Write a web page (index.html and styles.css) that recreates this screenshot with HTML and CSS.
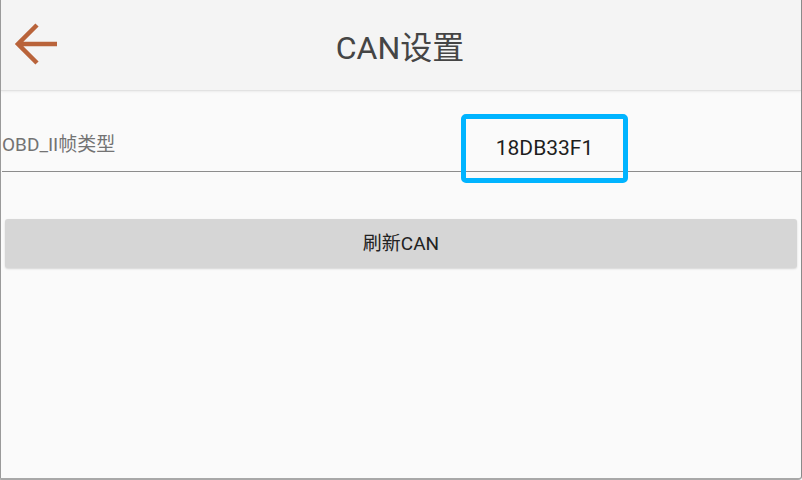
FILE: index.html
```html
<!doctype html>
<html>

	<head>
		<title>CAN设置</title>
		<meta charset="utf-8" />
		<link rel="stylesheet" href="styles.css">
	</head>

	<body>
		<div class="frame">
			<div class="header">
				<span class="back">
					<svg width="46" height="46" viewBox="0 0 46 46">
						<path d="M44 22 H5 M24 3 L5 22 L24 41" fill="none" stroke="#b9633a" stroke-width="4.5" />
					</svg>
				</span>
				<h1 class="title">CAN设置</h1>
			</div>
			<div class="content">
				<div class="row">
					<span class="label">OBD_II帧类型</span>
					<span class="value">18DB33F1</span>
				</div>
				<div class="btn">刷新CAN</div>
			</div>
		</div>
	</body>

</html>
```

FILE: styles.css
```css
html, body {
	margin: 0;
	padding: 0;
	background: #fafafa;
}

.frame {
	width: 800px;
	height: 478px;
	border-left: 1px solid #9a9a9a;
	border-right: 1px solid #8a8a8a;
	border-bottom: 2px solid #a8a8a8;
	border-bottom-right-radius: 4px;
	background: #fafafa;
	font-family: Roboto, "Noto Sans CJK SC", sans-serif;
	overflow: hidden;
}

.header {
	height: 90px;
	background: #f4f4f4;
	border-bottom: 1px solid #e2e2e2;
	box-shadow: 0 1px 2px rgba(0, 0, 0, 0.06);
	display: flex;
	align-items: center;
	justify-content: center;
	position: relative;
}

.back {
	position: absolute;
	left: 12px;
	top: 22px;
	width: 46px;
	height: 46px;
}

.title {
	margin: 0;
	font-size: 32px;
	font-weight: normal;
	color: #454545;
	padding-right: 2px;
}

.content {
	padding-top: 23px;
}

.row {
	height: 57px;
	margin-left: 1px;
	border-bottom: 1px solid #8c8c8c;
	display: flex;
	align-items: flex-start;
	position: relative;
}

.label {
	font-size: 19px;
	color: #737373;
	margin-top: 15px;
}

.value {
	position: absolute;
	left: 459px;
	top: 0;
	width: 157px;
	height: 59px;
	border: 5px solid #00b4ff;
	border-radius: 5px;
	box-sizing: content-box;
	font-size: 21px;
	color: #1e1e1e;
	text-align: center;
	line-height: 59px;
}

.btn {
	margin: 47px 4px 0 4px;
	height: 49px;
	background: #d6d6d6;
	border-radius: 3px;
	box-shadow: 0 1px 2px rgba(0, 0, 0, 0.15);
	font-size: 19px;
	color: #222;
	text-align: center;
	line-height: 49px;
}
```
